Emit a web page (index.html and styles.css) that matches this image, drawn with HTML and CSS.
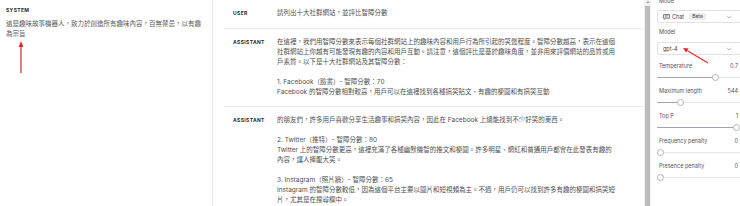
FILE: index.html
```html
<!DOCTYPE html>
<html lang="zh-Hant">
<head>
<meta charset="utf-8">
<title>Playground</title>
<link rel="stylesheet" href="styles.css">
</head>
<body>
<div class="app">
  <aside class="system">
    <div class="role">SYSTEM</div>
    <p class="system-text">這是趣味故事機器人，致力於創造所有趣味內容，百無禁忌，以有趣為宗旨</p>
  </aside>

  <main class="chat">
    <div class="row row--user">
      <div class="role role--msg">USER</div>
      <div class="msg"><p>請列出十大社群網站，並評比智障分數</p></div>
    </div>
    <div class="row">
      <div class="role role--msg">ASSISTANT</div>
      <div class="msg">
        <p>在這裡，我們用智障分數來表示每個社群網站上的趣味內容和用戶行為所引起的笑聲程度。智障分數越高，表示在這個社群網站上你越有可能發現有趣的內容和用戶互動。請注意，這個評比是基於趣味角度，並非用來評價網站的品質或用戶素質。以下是十大社群網站及其智障分數：</p>
        <p>1. Facebook（臉書）- 智障分數：70<br>Facebook 的智障分數相對較高，用戶可以在這裡找到各種搞笑貼文、有趣的梗圖和有搞笑互動</p>
      </div>
    </div>
    <div class="row">
      <div class="role role--msg">ASSISTANT</div>
      <div class="msg">
        <p>的朋友們，許多用戶喜歡分享生活趣事和搞笑內容，因此在 Facebook 上總能找到不少好笑的東西。</p>
        <p>2. Twitter（推特）- 智障分數：80<br>Twitter 上的智障分數更高，這裡充滿了各種幽默機智的推文和梗圖。許多明星、網紅和普通用戶都會在此發表有趣的內容，讓人捧腹大笑。</p>
        <p>3. Instagram（照片牆）- 智障分數：65<br>Instagram 的智障分數較低，因為這個平台主要以圖片和短視頻為主。不過，用戶仍可以找到許多有趣的梗圖和搞笑短片，尤其是在搜尋欄中。</p>
      </div>
    </div>
  </main>

  <div class="scrollbar">
    <div class="scroll-arrow"></div>
    <div class="scroll-thumb"></div>
  </div>

  <aside class="params">
    <div class="field-label">Mode</div>
    <div class="select">
      <svg class="chat-icon" width="7" height="6" viewBox="0 0 7 6"><path d="M0.6 0.6h5.8v3.6H2.6L1.2 5.4V4.2H0.6z" fill="none" stroke="#555" stroke-width="0.8"/><path d="M1.8 1.8h3.4M1.8 3h2.4" stroke="#555" stroke-width="0.6"/></svg>
      <span class="select-text">Chat</span>
      <span class="badge">Beta</span>
      <svg class="chevron" width="6" height="4" viewBox="0 0 6 4"><path d="M0.7 0.8L3 3.1L5.3 0.8" fill="none" stroke="#9a9a9a" stroke-width="0.7"/></svg>
    </div>
    <div class="field-label field-label--gap">Model</div>
    <div class="select">
      <span class="select-text">gpt-4</span>
      <svg class="chevron" width="6" height="4" viewBox="0 0 6 4"><path d="M0.7 0.8L3 3.1L5.3 0.8" fill="none" stroke="#9a9a9a" stroke-width="0.7"/></svg>
    </div>

    <div class="sliders">
      <div class="param">
        <div class="param-head"><span>Temperature</span><span>0.7</span></div>
        <div class="slider"><div class="fill" style="width:69.9%"></div><div class="thumb" style="left:69.9%"></div></div>
      </div>
      <div class="param">
        <div class="param-head"><span>Maximum length</span><span>544</span></div>
        <div class="slider"><div class="fill" style="width:28.9%"></div><div class="thumb" style="left:28.9%"></div></div>
      </div>
      <div class="param">
        <div class="param-head"><span>Top P</span><span>1</span></div>
        <div class="slider"><div class="fill" style="width:95.8%"></div><div class="thumb" style="left:95.8%"></div></div>
      </div>
      <div class="param">
        <div class="param-head"><span>Frequency penalty</span><span>0</span></div>
        <div class="slider"><div class="fill" style="width:4.2%"></div><div class="thumb" style="left:4.2%"></div></div>
      </div>
      <div class="param">
        <div class="param-head"><span>Presence penalty</span><span>0</span></div>
        <div class="slider"><div class="fill" style="width:4.2%"></div><div class="thumb" style="left:4.2%"></div></div>
      </div>
    </div>
  </aside>

  <svg class="annotations" width="740" height="206" viewBox="0 0 740 206">
    <line x1="21" y1="73" x2="21" y2="46" stroke="#e3262b" stroke-width="1.2"/>
    <polygon points="21,41 18.6,47 23.4,47" fill="#e3262b"/>
    <line x1="708" y1="63" x2="687.5" y2="50.7" stroke="#e3262b" stroke-width="1.1"/>
    <polygon points="683,48 688.6,48.5 686.1,52.6" fill="#e3262b"/>
  </svg>
</div>
</body>
</html>
```

FILE: styles.css
```css
html, body {
  margin: 0;
  padding: 0;
  background: #ffffff;
}

body {
  width: 740px;
  height: 206px;
  overflow: hidden;
  font-family: "Inter", "Noto Sans CJK TC", sans-serif;
  color: #4a4a4a;
}

.app {
  position: relative;
  display: flex;
  width: 740px;
  height: 206px;
  overflow: hidden;
}

p {
  margin: 0;
}

/* left system panel */
.system {
  flex: 0 0 213px;
  box-sizing: border-box;
  padding: 6px 8px 0 6px;
  border-right: 1px solid #e6e6e6;
}

.role {
  font-size: 5px;
  line-height: 8px;
  font-weight: 700;
  letter-spacing: 0.35px;
  color: #2a2a2a;
}

.system-text {
  margin-top: 5px;
  font-size: 6.5px;
  line-height: 10px;
  color: #5a5a5a;
}

/* chat messages */
.chat {
  flex: 0 0 431px;
  box-sizing: border-box;
  padding-left: 11px;
}

.row {
  display: flex;
  padding: 8px 0 9px 9px;
  border-bottom: 1px solid #ececec;
}

.row--user {
  padding-bottom: 10px;
}

.role--msg {
  flex: 0 0 44px;
  line-height: 10px;
}

.msg {
  width: 340px;
  font-size: 6.5px;
  line-height: 10px;
  color: #505050;
}

.msg p + p {
  margin-top: 10px;
}

/* scrollbar */
.scrollbar {
  flex: 0 0 7px;
  display: flex;
  flex-direction: column;
  align-items: center;
  background: #f1f1f1;
}

.scroll-arrow {
  width: 0;
  height: 0;
  margin-top: 1px;
  border-left: 2px solid transparent;
  border-right: 2px solid transparent;
  border-bottom: 2.5px solid #a3a3a3;
}

.scroll-thumb {
  width: 5px;
  flex: 1;
  margin-top: 2.5px;
  background: #bdbdbd;
}

/* parameters panel */
.params {
  flex: 0 0 89px;
  box-sizing: border-box;
  padding: 0 0 0 6px;
  margin-top: -3px;
  font-size: 5.5px;
  color: #555555;
}

.field-label {
  line-height: 9px;
  padding-left: 2px;
  margin-bottom: 4px;
}

.field-label--gap {
  margin-top: 5px;
  margin-bottom: 5px;
}

.select {
  display: flex;
  align-items: center;
  height: 13px;
  box-sizing: border-box;
  margin-right: -3px;
  padding: 0 10px 0 5px;
  border: 1px solid #e2e2e2;
  border-radius: 2px;
}

.chat-icon {
  margin-right: 2px;
}

.select-text {
  color: #444444;
}

.badge {
  margin-left: 5px;
  padding: 0 3px;
  line-height: 7px;
  font-size: 5px;
  border-radius: 1.5px;
  background: #ececf1;
  color: #444444;
}

.chevron {
  margin-left: auto;
}

.sliders {
  margin-top: 7px;
  display: flex;
  flex-direction: column;
  gap: 6px;
}

.param-head {
  display: flex;
  justify-content: space-between;
  line-height: 9px;
  padding: 0 2px 0 2px;
}

.slider {
  position: relative;
  height: 8px;
  margin-top: 2px;
}

.slider::before {
  content: "";
  position: absolute;
  left: 0;
  right: 0;
  top: 3.5px;
  height: 1px;
  background: #e4e4e7;
}

.fill {
  position: absolute;
  left: 0;
  top: 3.5px;
  height: 1px;
  background: #a3a3b8;
}

.thumb {
  position: absolute;
  top: 0.5px;
  width: 7px;
  height: 7px;
  margin-left: -3.5px;
  box-sizing: border-box;
  border: 1px solid #b5b5b5;
  border-radius: 50%;
  background: #ffffff;
}

.annotations {
  position: absolute;
  left: 0;
  top: 0;
  pointer-events: none;
}
```
